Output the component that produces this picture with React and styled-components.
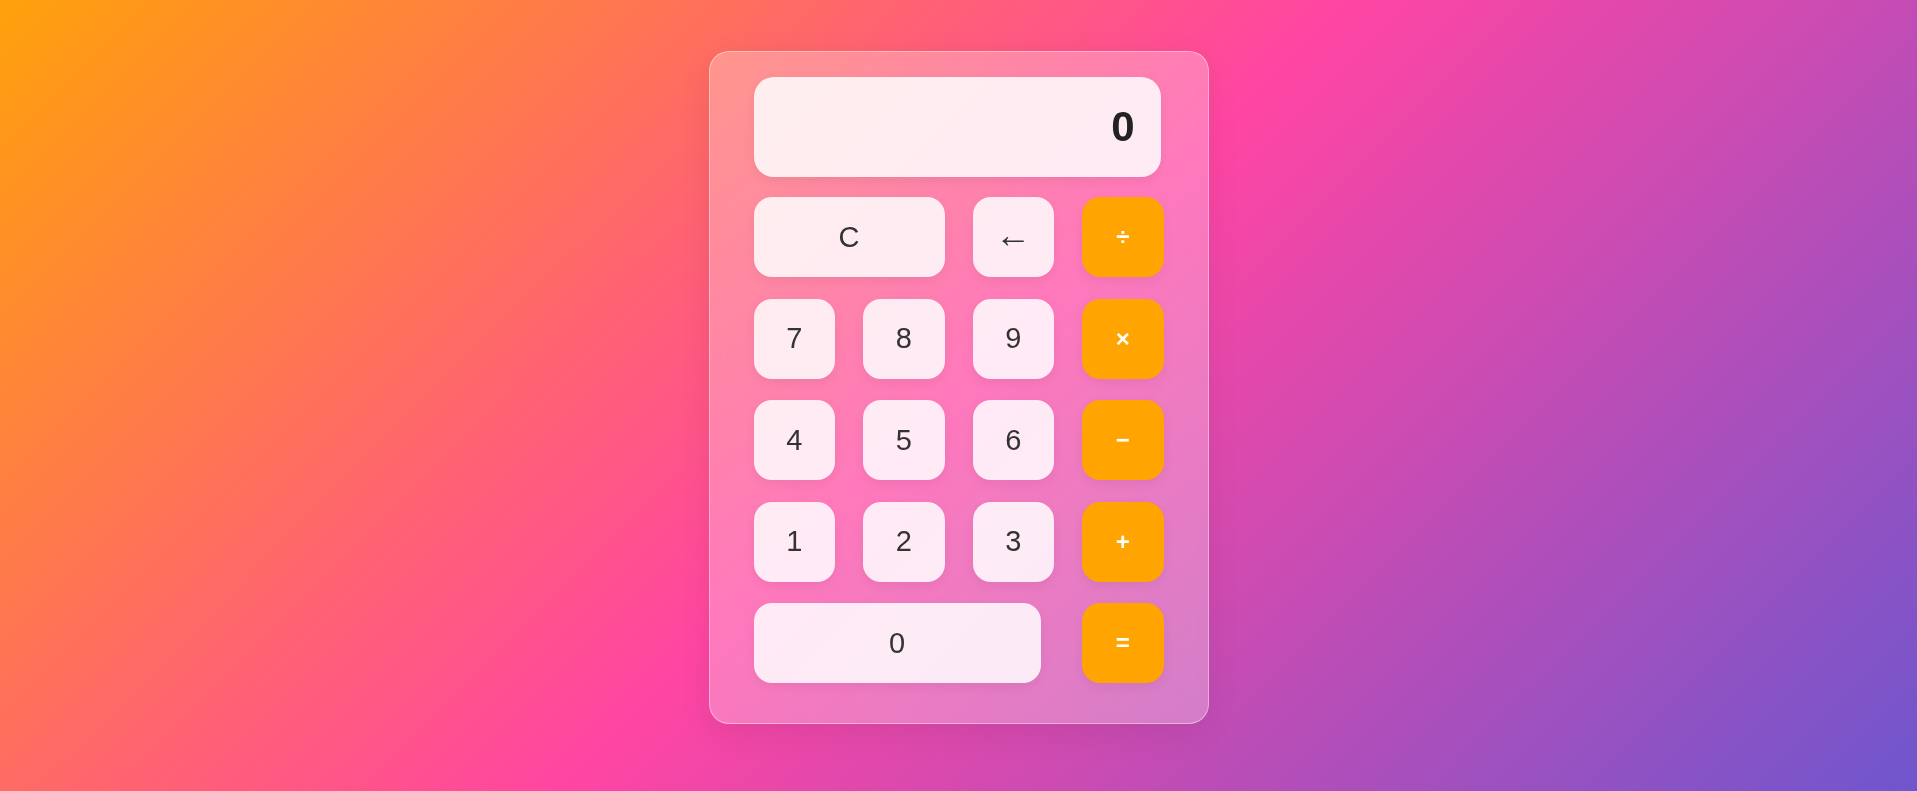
import React, { useState } from 'react';
import styled, { createGlobalStyle } from 'styled-components';

const GlobalStyle = createGlobalStyle`
  * { box-sizing: border-box; }
  html, body {
    margin: 0;
    padding: 0;
    font-family: "Liberation Sans", Arial, sans-serif;
  }
`;

const Page = styled.div`
  height: 100vh;
  padding-bottom: 16px;
  display: flex;
  align-items: center;
  justify-content: center;
  background: linear-gradient(135deg, #ffa10a 0%, #ff45a3 50%, #6f56cd 100%);
`;

const Card = styled.div`
  width: 500px;
  padding: 25px 44px 40px 44px;
  border-radius: 20px;
  background: rgba(255, 255, 255, 0.28);
  border: 1px solid rgba(255, 255, 255, 0.4);
  box-shadow: 0 8px 32px rgba(0, 0, 0, 0.08);
  backdrop-filter: blur(10px);
  display: flex;
  flex-direction: column;
  gap: 20px;
`;

const Display = styled.div`
  width: 407px;
  height: 100px;
  border-radius: 20px;
  background: rgba(255, 255, 255, 0.85);
  box-shadow: 0 4px 12px rgba(0, 0, 0, 0.06);
  display: flex;
  align-items: center;
  justify-content: flex-end;
  padding: 0 26px;
  font-size: 42px;
  font-weight: 700;
  color: #222;
`;

const Keys = styled.div`
  display: grid;
  grid-template-columns: repeat(4, 81.5px);
  grid-auto-rows: 80px;
  column-gap: 28px;
  row-gap: 21.5px;
`;

const Key = styled.button`
  grid-column: span ${props => props.span || 1};
  width: ${props => props.width ? `${props.width}px` : 'auto'};
  border: none;
  border-radius: 18px;
  font-family: inherit;
  cursor: pointer;
  display: flex;
  align-items: center;
  justify-content: center;
  padding: 0 0 ${props => props.arrow ? '5px' : '0'} 0;
  background: ${props => props.op ? '#ffa400' : 'rgba(255, 255, 255, 0.85)'};
  color: ${props => props.op ? '#ffffff' : '#333333'};
  font-size: ${props => props.op ? '24px' : props.arrow ? '36px' : '29px'};
  font-weight: ${props => props.op ? 700 : 400};
  box-shadow: 0 4px 12px rgba(0, 0, 0, 0.06);
  transition: transform 0.1s ease;

  &:active {
    transform: scale(0.97);
  }
`;

const rows = [
  [{ label: 'C', span: 2 }, { label: '←', arrow: true }, { label: '÷', op: true }],
  [{ label: '7' }, { label: '8' }, { label: '9' }, { label: '×', op: true }],
  [{ label: '4' }, { label: '5' }, { label: '6' }, { label: '−', op: true }],
  [{ label: '1' }, { label: '2' }, { label: '3' }, { label: '+', op: true }],
  [{ label: '0', span: 3, width: 287 }, { label: '=', op: true }],
];

const App = () => {
  const [value, setValue] = useState('0');

  const press = (label) => {
    if (label === 'C') return setValue('0');
    if (label === '←') return setValue(v => (v.length > 1 ? v.slice(0, -1) : '0'));
    if (label === '=') {
      try {
        const expr = value.replace(/×/g, '*').replace(/÷/g, '/').replace(/−/g, '-');
        // eslint-disable-next-line no-new-func
        const result = Function(`return (${expr})`)();
        setValue(String(result));
      } catch (e) {
        setValue('0');
      }
      return;
    }
    setValue(v => (v === '0' && /\d/.test(label) ? label : v + label));
  };

  return (
    <>
      <GlobalStyle />
      <Page>
        <Card>
          <Display>{value}</Display>
          <Keys>
            {rows.flat().map(key => (
              <Key
                key={key.label}
                span={key.span}
                width={key.width}
                op={key.op ? 1 : 0}
                arrow={key.arrow ? 1 : 0}
                onClick={() => press(key.label)}
              >
                {key.label}
              </Key>
            ))}
          </Keys>
        </Card>
      </Page>
    </>
  );
};

export default App;
